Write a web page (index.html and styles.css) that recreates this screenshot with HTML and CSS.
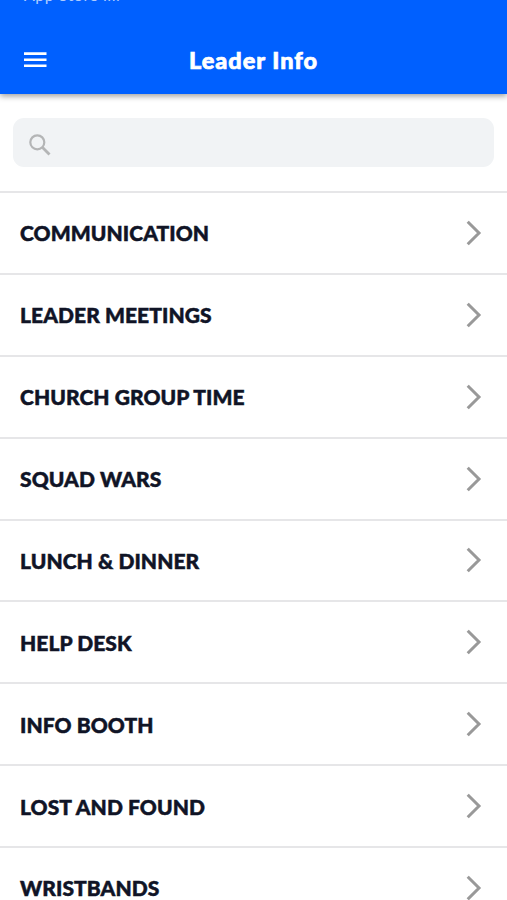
FILE: index.html
```
<!DOCTYPE html>
<html lang="en">
<head>
    <meta charset="UTF-8">
    <meta name="viewport" content="width=device-width, initial-scale=1.0">
    <title>Leader Info</title>
    <link rel="stylesheet" href="styles.css">
</head>
<body>
    <header class="header">
        <div class="status-bar">App Store ıııl</div>
        <div class="nav-bar">
            <button class="menu-btn" aria-label="Menu">
                <svg width="24" height="16" viewBox="0 0 24 16">
                    <path d="M0 1.6h22.5M0 7.7h22.5M0 13.8h22.5" stroke="#fff" stroke-width="2.6"/>
                </svg>
            </button>
            <h1>Leader Info</h1>
        </div>
    </header>

    <div class="search">
        <div class="search-box">
            <svg width="22" height="22" viewBox="0 0 22 22" fill="none" stroke="#b4b5b6">
                <circle cx="8.3" cy="8.3" r="7" stroke-width="2.2"/>
                <path d="M13.3 13.3l7.2 7.2" stroke-width="2.8"/>
            </svg>
        </div>
    </div>

    <ul class="list" id="list"></ul>

    <script>
        const items = [
            'COMMUNICATION',
            'LEADER MEETINGS',
            'CHURCH GROUP TIME',
            'SQUAD WARS',
            'LUNCH & DINNER',
            'HELP DESK',
            'INFO BOOTH',
            'LOST AND FOUND',
            'WRISTBANDS'
        ];
        const list = document.getElementById('list');

        items.forEach(item => {
            const row = document.createElement('li');
            const label = document.createElement('span');
            row.className = 'row';
            label.textContent = item;
            row.appendChild(label);
            row.insertAdjacentHTML('beforeend',
                '<svg width="16" height="26" viewBox="0 0 16 26"><path d="M1.7 1.7L13 13L1.7 24.3" fill="none" stroke="#999" stroke-width="3"/></svg>');
            list.appendChild(row);
        });
    </script>
</body>
</html>
```
FILE: styles.css
```
* {
    margin: 0;
    padding: 0;
    box-sizing: border-box;
}

body {
    height: 900px;
    overflow: hidden;
    background-color: #fff;
    color: #101426;
    font-family: Lato, 'Liberation Sans', sans-serif;
}

/* Header */
.header {
    display: flow-root;
    height: 94px;
    background-color: #0060ff;
    color: #fff;
    box-shadow: 0 2px 6px rgba(0, 0, 0, 0.4);
}

/* Only the bottom edge of the status text shows */
.status-bar {
    height: 26px;
    margin-top: -5px;
    padding-left: 24px;
    color: rgba(255, 255, 255, 0.7);
    font-size: 16px;
    line-height: 0;
    letter-spacing: 0.5px;
}

.nav-bar {
    display: grid;
    grid-template-columns: 70px 1fr 70px;
    align-items: center;
    height: 78px;
}

.menu-btn {
    display: flex;
    margin-left: 24px;
    border: none;
    background: none;
}

h1 {
    font-size: 23.5px;
    font-weight: 900;
    letter-spacing: 1px;
    text-align: center;
    -webkit-text-stroke: 0.7px #fff;
}

/* Search */
.search {
    height: 97px;
    padding: 24px 13px 0;
}

.search-box {
    display: flex;
    align-items: center;
    height: 49px;
    padding: 4px 0 0 16px;
    border-radius: 11px;
    background-color: #f1f3f5;
}

/* List */
.list {
    list-style: none;
}

.row {
    display: flex;
    justify-content: space-between;
    align-items: center;
    height: 81.88px;
    padding: 0 25px 0 20px;
    border-top: 2px solid #e6e6e8;
    font-size: 21px;
    font-weight: 900;
    letter-spacing: 0.07px;
}

.row span {
    -webkit-text-stroke: 0.5px #101426;
}
```
